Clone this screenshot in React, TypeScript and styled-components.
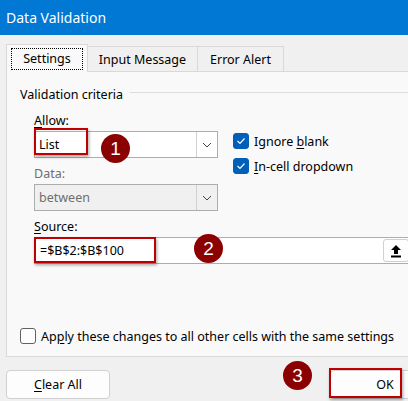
import React from "react";
import styled, { createGlobalStyle } from "styled-components";

const Global = createGlobalStyle`
  html, body { margin: 0; padding: 0; background: #f0f0f0; }
  body { font-family: "Segoe UI", "Noto Sans", "Open Sans", sans-serif; color: #000; }
`;

const FS = "12.5px";

const Frame = styled.div`
  width: 408px;
  height: 401px;
  overflow: hidden;
  background: #f0f0f0;
  position: relative;
`;

const Inner = styled.div`
  width: 440px;
`;

const TitleBar = styled.div`
  height: 35px;
  background: #0178d4;
  color: #fff;
  font-size: 14px;
  display: flex;
  align-items: center;
  padding-left: 6px;
`;

const Body = styled.div`
  padding: 9px 0 0 6px;
`;

const TabStrip = styled.div`
  display: flex;
  align-items: flex-end;
  height: 28px;
  position: relative;
  z-index: 1;
`;

const Tab = styled.div<{ $active?: boolean; $w: number }>`
  box-sizing: border-box;
  height: ${(p) => (p.$active ? 28 : 26)}px;
  width: ${(p) => p.$w}px;
  background: ${(p) => (p.$active ? "#f9f9f9" : "#f0f0f0")};
  border: 1px solid #d9d9d9;
  border-bottom: ${(p) => (p.$active ? "none" : "1px solid #d9d9d9")};
  margin-left: ${(p) => (p.$active ? 0 : -1)}px;
  font-size: ${FS};
  display: flex;
  align-items: center;
  justify-content: center;
  padding-top: ${(p) => (p.$active ? 0 : 1)}px;
`;

const FocusRing = styled.span`
  border: 1px dotted #000;
  padding: 1px 11px 2px;
`;

const Panel = styled.div`
  box-sizing: border-box;
  margin-top: -1px;
  height: 286px;
  background: #f9f9f9;
  border: 1px solid #d9d9d9;
  border-right: none;
  padding: 12px 0 0 13px;
  display: flex;
  flex-direction: column;
`;

const GroupHeader = styled.div`
  display: flex;
  align-items: center;
  gap: 7px;
  font-size: ${FS};
  height: 20px;
  &::after {
    content: "";
    flex: 1;
    border-top: 1px solid #dcdcdc;
    margin-top: -3px;
  }
`;

const Indent = styled.div`
  padding-left: 14px;
  display: flex;
  flex-direction: column;
`;

const Label = styled.div<{ $disabled?: boolean }>`
  font-size: ${FS};
  height: 19px;
  line-height: 19px;
  color: ${(p) => (p.$disabled ? "#6e6e6e" : "#000")};
  u { text-decoration: underline; text-underline-offset: 2px; }
`;

const Row = styled.div`
  display: flex;
  align-items: flex-start;
  gap: 15px;
  height: 27px;
`;

const FieldWrap = styled.div`
  position: relative;
`;

const Combo = styled.div<{ $disabled?: boolean }>`
  box-sizing: border-box;
  width: 184px;
  height: 27px;
  border: 1px solid #adadad;
  background: ${(p) => (p.$disabled ? "#f0f0f0" : "#fff")};
  color: ${(p) => (p.$disabled ? "#6e6e6e" : "#000")};
  display: flex;
  align-items: center;
  font-size: ${FS};
`;

const ComboText = styled.span`
  flex: 1;
  padding-left: 4px;
`;

const ComboButton = styled.span`
  box-sizing: border-box;
  width: 21px;
  height: 100%;
  border-left: 1px solid #d0d0d0;
  display: flex;
  align-items: center;
  justify-content: center;
`;

const CheckCol = styled.div`
  display: flex;
  flex-direction: column;
  gap: 9px;
  padding-top: 2px;
`;

const CheckRow = styled.label`
  display: flex;
  align-items: center;
  gap: 5px;
  font-size: ${FS};
  height: 16px;
  u { text-decoration: underline; text-underline-offset: 2px; }
`;

const Box = styled.span<{ $checked?: boolean }>`
  box-sizing: border-box;
  width: 16px;
  height: 16px;
  border-radius: 3px;
  background: ${(p) => (p.$checked ? "#005fb8" : "#fdfdfd")};
  border: 1px solid ${(p) => (p.$checked ? "#005fb8" : "#616161")};
  display: flex;
  align-items: center;
  justify-content: center;
  flex: none;
`;

const SourceInput = styled.div`
  box-sizing: border-box;
  width: 378px;
  height: 27px;
  border: 1px solid #adadad;
  background: #fff;
  display: flex;
  align-items: center;
  font-size: ${FS};
`;

const SourceText = styled.span`
  flex: 1;
  padding-left: 5px;
`;

const PickButton = styled.span`
  box-sizing: border-box;
  width: 26px;
  height: 23px;
  margin-right: 2px;
  border: 1px solid #d0d0d0;
  border-radius: 3px;
  background: #fefefe;
  display: flex;
  align-items: center;
  justify-content: center;
`;

const Highlight = styled.div<{ $l: number; $t: number; $w: number; $h: number }>`
  position: absolute;
  left: ${(p) => p.$l}px;
  top: ${(p) => p.$t}px;
  width: ${(p) => p.$w}px;
  height: ${(p) => p.$h}px;
  box-sizing: border-box;
  border: 2px solid #c00000;
  box-shadow: 1px 2px 3px rgba(0, 0, 0, 0.35);
  pointer-events: none;
`;

const Badge = styled.div<{ $l: number; $t: number }>`
  position: absolute;
  left: ${(p) => p.$l}px;
  top: ${(p) => p.$t}px;
  width: 29px;
  height: 29px;
  border-radius: 50%;
  background: #8b0000;
  color: #fff;
  font-family: "Liberation Sans", Arial, sans-serif;
  font-size: 19px;
  display: flex;
  align-items: center;
  justify-content: center;
`;

const Spacer = styled.div<{ $h: number }>`
  height: ${(p) => p.$h}px;
  flex: none;
`;

const Footer = styled.div`
  display: flex;
  align-items: flex-start;
  padding-top: 13px;
`;

const Button = styled.div<{ $w: number }>`
  box-sizing: border-box;
  width: ${(p) => p.$w}px;
  height: 29px;
  border: 1px solid #d0d0d0;
  border-radius: 4px;
  background: #fdfdfd;
  font-size: ${FS};
  display: flex;
  align-items: center;
  justify-content: center;
  u { text-decoration: underline; text-underline-offset: 2px; }
`;

const OkWrap = styled.div`
  position: relative;
  margin-left: 220px;
`;

const Chevron = () => (
  <svg width="10" height="6" viewBox="0 0 10 6">
    <path d="M1 1 L5 5 L9 1" fill="none" stroke="#444" strokeWidth="1" />
  </svg>
);

const Check = () => (
  <svg width="10" height="8" viewBox="0 0 10 8">
    <path d="M1.5 4 L4 6.5 L8.5 1.5" fill="none" stroke="#fff" strokeWidth="1.2" />
  </svg>
);

const UploadIcon = () => (
  <svg width="12" height="14" viewBox="0 0 12 14">
    <path d="M6 1 L11 6 L8 6 L8 10 L4 10 L4 6 L1 6 Z" fill="#000" />
    <rect x="1" y="11.5" width="10" height="2" fill="#000" />
  </svg>
);

export default function App() {
  return (
    <>
      <Global />
      <Frame>
        <Inner>
          <TitleBar>Data Validation</TitleBar>
          <Body>
            <TabStrip>
              <Tab $active $w={82}>
                <FocusRing>Settings</FocusRing>
              </Tab>
              <Tab $w={111}>Input Message</Tab>
              <Tab $w={87}>Error Alert</Tab>
            </TabStrip>
            <Panel>
              <GroupHeader>Validation criteria</GroupHeader>
              <Indent>
                <Spacer $h={7} />
                <Label>
                  <u>A</u>llow:
                </Label>
                <Spacer $h={1} />
                <Row>
                  <FieldWrap>
                    <Combo>
                      <ComboText>List</ComboText>
                      <ComboButton>
                        <Chevron />
                      </ComboButton>
                    </Combo>
                    <Highlight $l={0} $t={-3} $w={54} $h={27} />
                    <Badge $l={67} $t={3}>1</Badge>
                  </FieldWrap>
                  <CheckCol>
                    <CheckRow>
                      <Box $checked>
                        <Check />
                      </Box>
                      <span>
                        Ignore <u>b</u>lank
                      </span>
                    </CheckRow>
                    <CheckRow>
                      <Box $checked>
                        <Check />
                      </Box>
                      <span>
                        <u>I</u>n-cell dropdown
                      </span>
                    </CheckRow>
                  </CheckCol>
                </Row>
                <Spacer $h={6} />
                <Label $disabled>Data:</Label>
                <Spacer $h={1} />
                <Combo $disabled>
                  <ComboText>between</ComboText>
                  <ComboButton>
                    <Chevron />
                  </ComboButton>
                </Combo>
                <Spacer $h={6} />
                <Label>
                  <u>S</u>ource:
                </Label>
                <Spacer $h={1} />
                <FieldWrap>
                  <SourceInput>
                    <SourceText>=$B$2:$B$100</SourceText>
                    <PickButton>
                      <UploadIcon />
                    </PickButton>
                  </SourceInput>
                  <Highlight $l={0} $t={0} $w={122} $h={26} />
                  <Badge $l={160} $t={-3}>2</Badge>
                </FieldWrap>
              </Indent>
              <Spacer $h={64} />
              <CheckRow>
                <Box />
                <span>
                  Ap<u>p</u>ly these changes to all other cells with the same settings
                </span>
              </CheckRow>
            </Panel>
            <Footer>
              <Button $w={110}>
                <span>
                  <u>C</u>lear All
                </span>
              </Button>
              <OkWrap>
                <Button $w={110}>OK</Button>
                <Highlight $l={-1} $t={-2} $w={73} $h={30} />
                <Badge $l={-47} $t={-9}>3</Badge>
              </OkWrap>
            </Footer>
          </Body>
        </Inner>
      </Frame>
    </>
  );
}
